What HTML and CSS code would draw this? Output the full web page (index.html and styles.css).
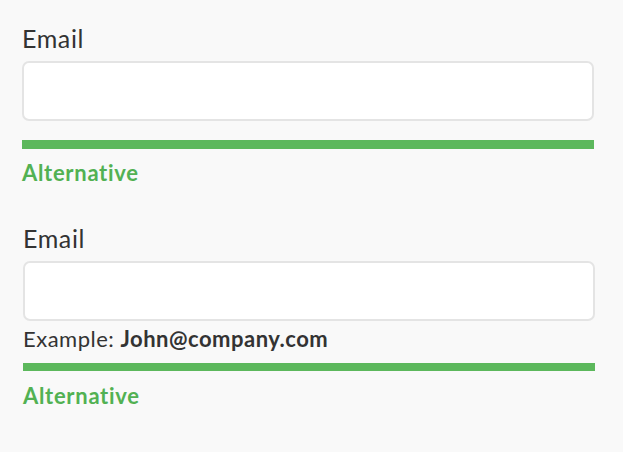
FILE: index.html
```html
<!DOCTYPE html>
<html>
<head>
<meta charset="utf-8">
<link rel="stylesheet" href="styles.css">
</head>
<body>
<div class="page">
  <div class="field field-one">
    <label class="label">Email</label>
    <div class="input"></div>
    <div class="bar"></div>
    <div class="alt">Alternative</div>
  </div>
  <div class="field field-two">
    <label class="label">Email</label>
    <div class="input"></div>
    <div class="hint">Example: <strong>John@company.com</strong></div>
    <div class="bar bar-two"></div>
    <div class="alt alt-two">Alternative</div>
  </div>
</div>
</body>
</html>
```
FILE: styles.css
```css
html, body {
  margin: 0;
  padding: 0;
  background: #f9f9f9;
}
body {
  font-family: Lato, "Open Sans", sans-serif;
  color: #333333;
}
.page {
  display: flex;
  flex-direction: column;
  padding: 24px 0 0 22px;
}
.field {
  display: flex;
  flex-direction: column;
  width: 572px;
}
.field-two {
  margin-top: 39px;
  margin-left: 1px;
}
.label {
  font-size: 25px;
  line-height: 29px;
  letter-spacing: 0.6px;
  display: block;
}
.input {
  margin-top: 8px;
  height: 56px;
  background: #ffffff;
  border: 2px solid #e4e4e4;
  border-radius: 7px;
}
.bar {
  margin-top: 19px;
  height: 9px;
  background: #5cb85c;
}
.alt {
  margin-top: 11px;
  font-size: 22px;
  line-height: 25px;
  letter-spacing: 0.7px;
  font-weight: 700;
  color: #52b153;
}
.hint {
  margin-top: 5px;
  font-size: 22px;
  line-height: 25px;
  letter-spacing: 0.5px;
  color: #333333;
}
.hint strong {
  font-weight: 700;
}
.bar-two {
  margin-top: 12px;
  height: 8px;
}
.alt-two {
  margin-top: 12px;
}
```
